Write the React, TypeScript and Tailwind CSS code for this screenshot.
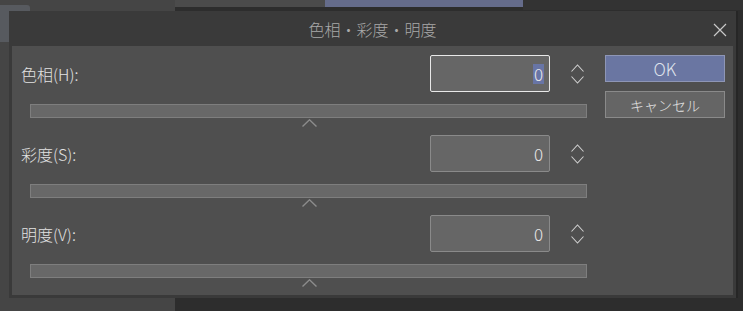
import React from "react";

const FONT = { fontFamily: '"Noto Sans CJK JP", "Noto Sans", sans-serif' };

function Spinner() {
  return (
    <div className="flex flex-col items-center gap-[4px] w-[13px]">
      <svg width="13" height="8" viewBox="0 0 13 8">
        <path d="M0.5 7.5 L6.5 1 L12.5 7.5" fill="none" stroke="#cfcfcf" strokeWidth="1.1" />
      </svg>
      <svg width="13" height="8" viewBox="0 0 13 8">
        <path d="M0.5 0.5 L6.5 7 L12.5 0.5" fill="none" stroke="#cfcfcf" strokeWidth="1.1" />
      </svg>
    </div>
  );
}

function Row({ label, focused }: { label: string; focused?: boolean }) {
  return (
    <div className="h-[80px] flex flex-col">
      <div className="h-[37px] flex items-center">
        <div className="flex-1 pl-[9px] text-[16px] font-light text-[#e2e2e2] leading-none">{label}</div>
        <div
          className={
            "w-[120px] h-[37px] rounded-[2px] bg-[#666666] flex items-center justify-end pr-[5px] border " +
            (focused ? "border-[#e8e8e8]" : "border-[#8a8a8a]")
          }
        >
          <span
            className={
              "text-[17px] font-light leading-[20px] px-[1px] text-[#e8e8e8] " + (focused ? "bg-[#6875a6]" : "")
            }
          >
            0
          </span>
        </div>
        <div className="ml-[21px] mr-[3px]">
          <Spinner />
        </div>
      </div>
      <div className="mt-[12px] ml-[18px] relative">
        <div className="h-[14px] bg-[#686868] border border-[#7e7e7e]" />
        <svg className="absolute left-[272px] top-[15px]" width="15" height="8" viewBox="0 0 15 8">
          <path d="M0.5 7.5 L7.5 0.8 L14.5 7.5" fill="none" stroke="#8c8c8c" strokeWidth="1.4" />
        </svg>
      </div>
    </div>
  );
}

export default function App() {
  return (
    <div className="w-[743px] h-[311px] relative overflow-hidden bg-[#2d2d2d]" style={FONT}>
      {/* background desktop */}
      <div className="absolute left-0 top-0 w-[175px] h-[311px] bg-[#454545]" />
      <div className="absolute left-0 top-[5px] w-[30px] h-[37px] bg-[#575a5f] rounded-tr-[3px]" />
      <div className="absolute left-[175px] top-0 w-[150px] h-[7px] bg-[#4b4b4b]" />
      <div className="absolute left-[325px] top-0 w-[198px] h-[7px] bg-[#656c8b]" />
      <div className="absolute left-[523px] top-0 w-[220px] h-[10px] bg-[#333333]" />

      {/* dialog */}
      <div className="absolute left-[9px] top-[11px] w-[729px] h-[287px] bg-[#262626] pr-[2px]">
        <div className="w-full h-full bg-[#3a3a3a] flex flex-col px-[3px] pb-[3px]">
          <div className="h-[36px] relative flex items-center justify-center">
            <span className="text-[16px] font-light text-[#a9a9a9] leading-none">色相・彩度・明度</span>
            <svg className="absolute right-[6px] top-[12px]" width="14" height="14" viewBox="0 0 14 14">
              <path d="M1 1 L13 13 M13 1 L1 13" stroke="#c8c8c8" strokeWidth="1.2" />
            </svg>
          </div>
          <div className="flex-1 bg-[#4f4f4f] flex">
            <div className="w-[575px] pt-[9px] flex flex-col">
              <Row label="色相(H):" focused />
              <Row label="彩度(S):" />
              <Row label="明度(V):" />
            </div>
            <div className="ml-[18px] pt-[9px] flex flex-col gap-[9px]">
              <div className="w-[120px] h-[27px] bg-[#6a76a2] border border-[#8e96b6] flex items-center justify-center text-[17px] font-light text-[#dfe2ec] leading-none">
                OK
              </div>
              <div className="w-[120px] h-[27px] bg-[#656565] border border-[#8a8a8a] flex items-center justify-center text-[14px] font-light text-[#e2e2e2] leading-none">
                キャンセル
              </div>
            </div>
          </div>
        </div>
      </div>
    </div>
  );
}
